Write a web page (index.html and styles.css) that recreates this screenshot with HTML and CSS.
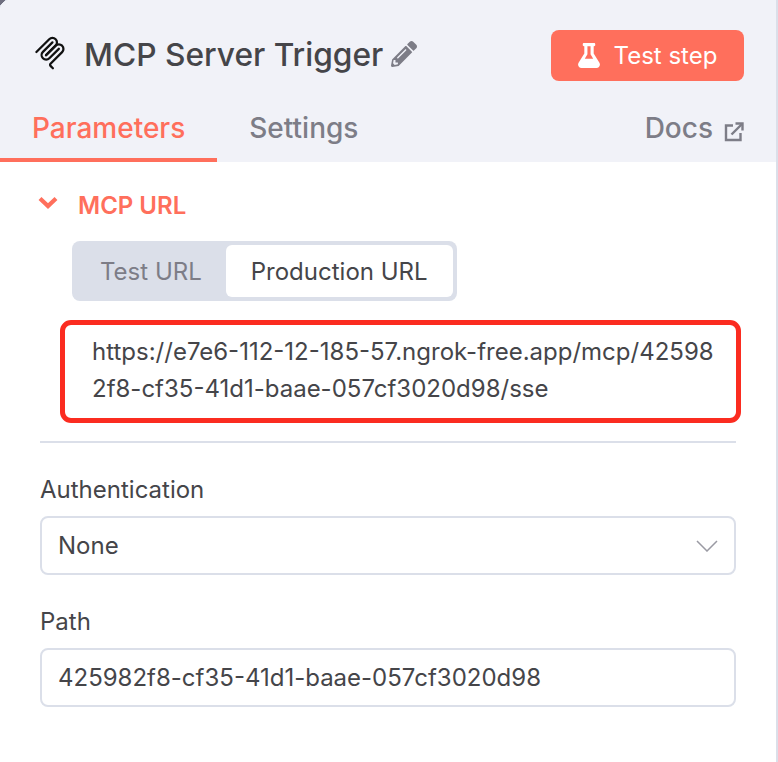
FILE: index.html
```html
<!DOCTYPE html>
<html lang="en">
<head>
  <meta charset="UTF-8">
  <title>MCP Server Trigger</title>
  <link rel="stylesheet" href="styles.css">
</head>
<body>
  <div class="panel">
    <div class="header">
      <div class="title-row">
        <div class="title">
          <svg class="node-icon" viewBox="0 0 180 180" fill="none" stroke="#111" stroke-width="12" stroke-linecap="round">
            <path d="M18 84.900 L85.900 17 C95.300 7.600 110.500 7.600 119.800 17 C129.200 26.300 129.200 41.500 119.800 50.900 L68.600 102.200"/>
            <path d="M69.300 101.500 L119.800 50.900 C129.200 41.500 144.400 41.500 153.800 50.900 L154.100 51.300 C163.500 60.600 163.500 75.800 154.100 85.200 L92.700 146.600 C89.600 149.700 89.600 154.800 92.700 157.900 L105.300 170.500"/>
            <path d="M102.900 33.900 L52.600 84.100 C43.300 93.500 43.300 108.700 52.600 118.100 C62 127.500 77.200 127.500 86.600 118.100 L136.800 67.900"/>
          </svg>
          <span class="node-name">MCP Server Trigger</span>
          <svg class="pencil" viewBox="0 0 512 512" fill="#7d7d87">
            <path d="M497.900 142.100l-46.100 46.100c-4.700 4.700-12.300 4.700-17 0l-111-111c-4.700-4.700-4.700-12.300 0-17l46.100-46.100c18.700-18.700 49.100-18.700 67.900 0l60.100 60.100c18.800 18.700 18.800 49.100 0 67.900zM284.200 99.800L21.600 362.400.4 483.900c-2.900 16.400 11.400 30.600 27.800 27.800l121.500-21.300 262.600-262.600c4.700-4.700 4.700-12.300 0-17l-111-111c-4.800-4.700-12.400-4.700-17.100 0zM124.100 339.900c-5.500-5.500-5.500-14.300 0-19.800l154-154c5.500-5.500 14.300-5.500 19.800 0s5.500 14.300 0 19.800l-154 154c-5.500 5.500-14.300 5.500-19.800 0zM88 424h48v36.300l-64.500 11.300-31.100-31.100L51.700 376H88v48z"/>
          </svg>
        </div>
        <button class="test-btn">
          <svg class="flask" viewBox="0 0 448 512" fill="#fff">
            <path d="M437.200 403.500L320 215V64h8c13.300 0 24-10.700 24-24V24c0-13.300-10.700-24-24-24H120c-13.300 0-24 10.700-24 24v16c0 13.300 10.700 24 24 24h8v151L10.800 403.500C-18.500 450.600 15.300 512 70.900 512h306.200c55.700 0 89.400-61.500 60.100-108.500zM137.900 320l48.200-77.600c3.700-5.200 5.800-11.600 5.800-18.400V64h64v160c0 6.900 2.200 13.200 5.800 18.400l48.200 77.600h-172z"/>
          </svg>
          Test step
        </button>
      </div>
      <div class="tabs">
        <div class="tab active">Parameters</div>
        <div class="tab">Settings</div>
        <div class="tab docs">
          Docs
          <svg class="ext" viewBox="0 0 20 20" fill="none" stroke="#7d7d87" stroke-width="2.400">
            <path d="M9 3.500 H2 V18 H16.500 V11"/>
            <path d="M7.500 12.500 L18 2"/>
            <path d="M11.500 1.500 H18.500 V8.500"/>
          </svg>
        </div>
      </div>
    </div>

    <div class="content">
      <div class="section-title">
        <svg class="chevron" viewBox="0 0 20 13" fill="none" stroke="#ff6f5c" stroke-width="4.200">
          <path d="M2 2.500 L10 10 L18 2.500"/>
        </svg>
        MCP URL
      </div>

      <div class="switch">
        <div class="switch-item">Test URL</div>
        <div class="switch-item selected">Production URL</div>
      </div>

      <div class="url-box">https://e7e6-112-12-185-57.ngrok-free.app/mcp/42598<br>2f8-cf35-41d1-baae-057cf3020d98/sse</div>

      <div class="divider"></div>

      <label class="field-label">Authentication</label>
      <div class="field">
        None
        <svg class="caret" viewBox="0 0 22 12" fill="none" stroke="#9a9aa3" stroke-width="1.500">
          <path d="M1 1 L11 11 L21 1"/>
        </svg>
      </div>

      <label class="field-label">Path</label>
      <div class="field">425982f8-cf35-41d1-baae-057cf3020d98</div>
    </div>
  </div>
</body>
</html>
```

FILE: styles.css
```css
* {
  box-sizing: border-box;
}

body {
  margin: 0;
  background: linear-gradient(135deg, #6f6f80 4px, #dbdfe9 4px);
  font-family: Inter, "Liberation Sans", sans-serif;
  color: #454549;
}

.panel {
  width: 776px;
  height: 762px;
  background-color: #fff;
  border-top-left-radius: 10px;
  overflow: hidden;
}

.header {
  height: 162px;
  background-color: #f1f2f8;
  padding-top: 30px;
}

.title-row {
  display: flex;
  justify-content: space-between;
  padding: 0 32px;
}

.title {
  display: flex;
  align-items: center;
  height: 51px;
}

.node-icon {
  align-self: flex-start;
  width: 34px;
  height: 34px;
  margin: 6px 0 0 1px;
}

.node-name {
  margin: -3px 0 0 17px;
  font-size: 31.700px;
  font-weight: 500;
}

.pencil {
  width: 26px;
  height: 26px;
  margin: -4px 0 0 8px;
}

.test-btn {
  display: flex;
  align-items: center;
  justify-content: center;
  width: 193px;
  height: 51px;
  border: none;
  border-radius: 8px;
  background-color: #ff6f5c;
  color: #fff;
  font-family: inherit;
  font-size: 24px;
}

.flask {
  width: 22px;
  height: 25px;
  margin-right: 14px;
}

.tabs {
  display: flex;
  align-items: flex-start;
  margin-top: 15px;
}

.tab {
  height: 66px;
  padding: 15px 32px 0;
  font-size: 28px;
  font-weight: 500;
  color: #7d7d87;
}

.tab.active {
  color: #ff6f5c;
  border-bottom: 4px solid #ff6f5c;
}

.tab.docs {
  display: flex;
  gap: 11px;
  margin-left: auto;
  padding-right: 32px;
}

.ext {
  width: 20px;
  height: 20px;
  margin-top: 11px;
}

.content {
  padding: 28px 40px 0;
}

.section-title {
  display: flex;
  align-items: center;
  height: 30px;
  font-size: 24px;
  font-weight: 600;
  color: #ff6f5c;
}

.chevron {
  width: 20px;
  height: 13px;
  margin: -6px 20px 0 -2px;
}

.switch {
  display: flex;
  width: fit-content;
  height: 60px;
  margin: 21px 0 0 32px;
  padding: 4px;
  border-radius: 8px;
  background-color: #dbdfe9;
  font-size: 24px;
}

.switch-item {
  display: flex;
  align-items: center;
  padding: 0 24px;
  color: #7d7d87;
  border-radius: 6px;
}

.switch-item.selected {
  padding: 0 25px;
  background-color: #fff;
  color: #454549;
}

.url-box {
  width: 681px;
  height: 103px;
  margin: 19px 0 0 20px;
  padding: 8px 0 0 27px;
  border: 5px solid #fb2c20;
  border-radius: 11px;
  font-size: 24px;
  line-height: 37px;
  white-space: nowrap;
}

.divider {
  height: 2px;
  margin-top: 18px;
  background-color: #dbdfe9;
}

.field-label {
  display: block;
  margin-top: 32px;
  font-size: 24px;
  line-height: 30px;
}

.field {
  display: flex;
  align-items: center;
  justify-content: space-between;
  height: 59px;
  margin-top: 11px;
  padding: 0 16px;
  border: 2px solid #dbdfe9;
  border-radius: 8px;
  font-size: 24px;
}

.caret {
  width: 22px;
  height: 12px;
}
```
